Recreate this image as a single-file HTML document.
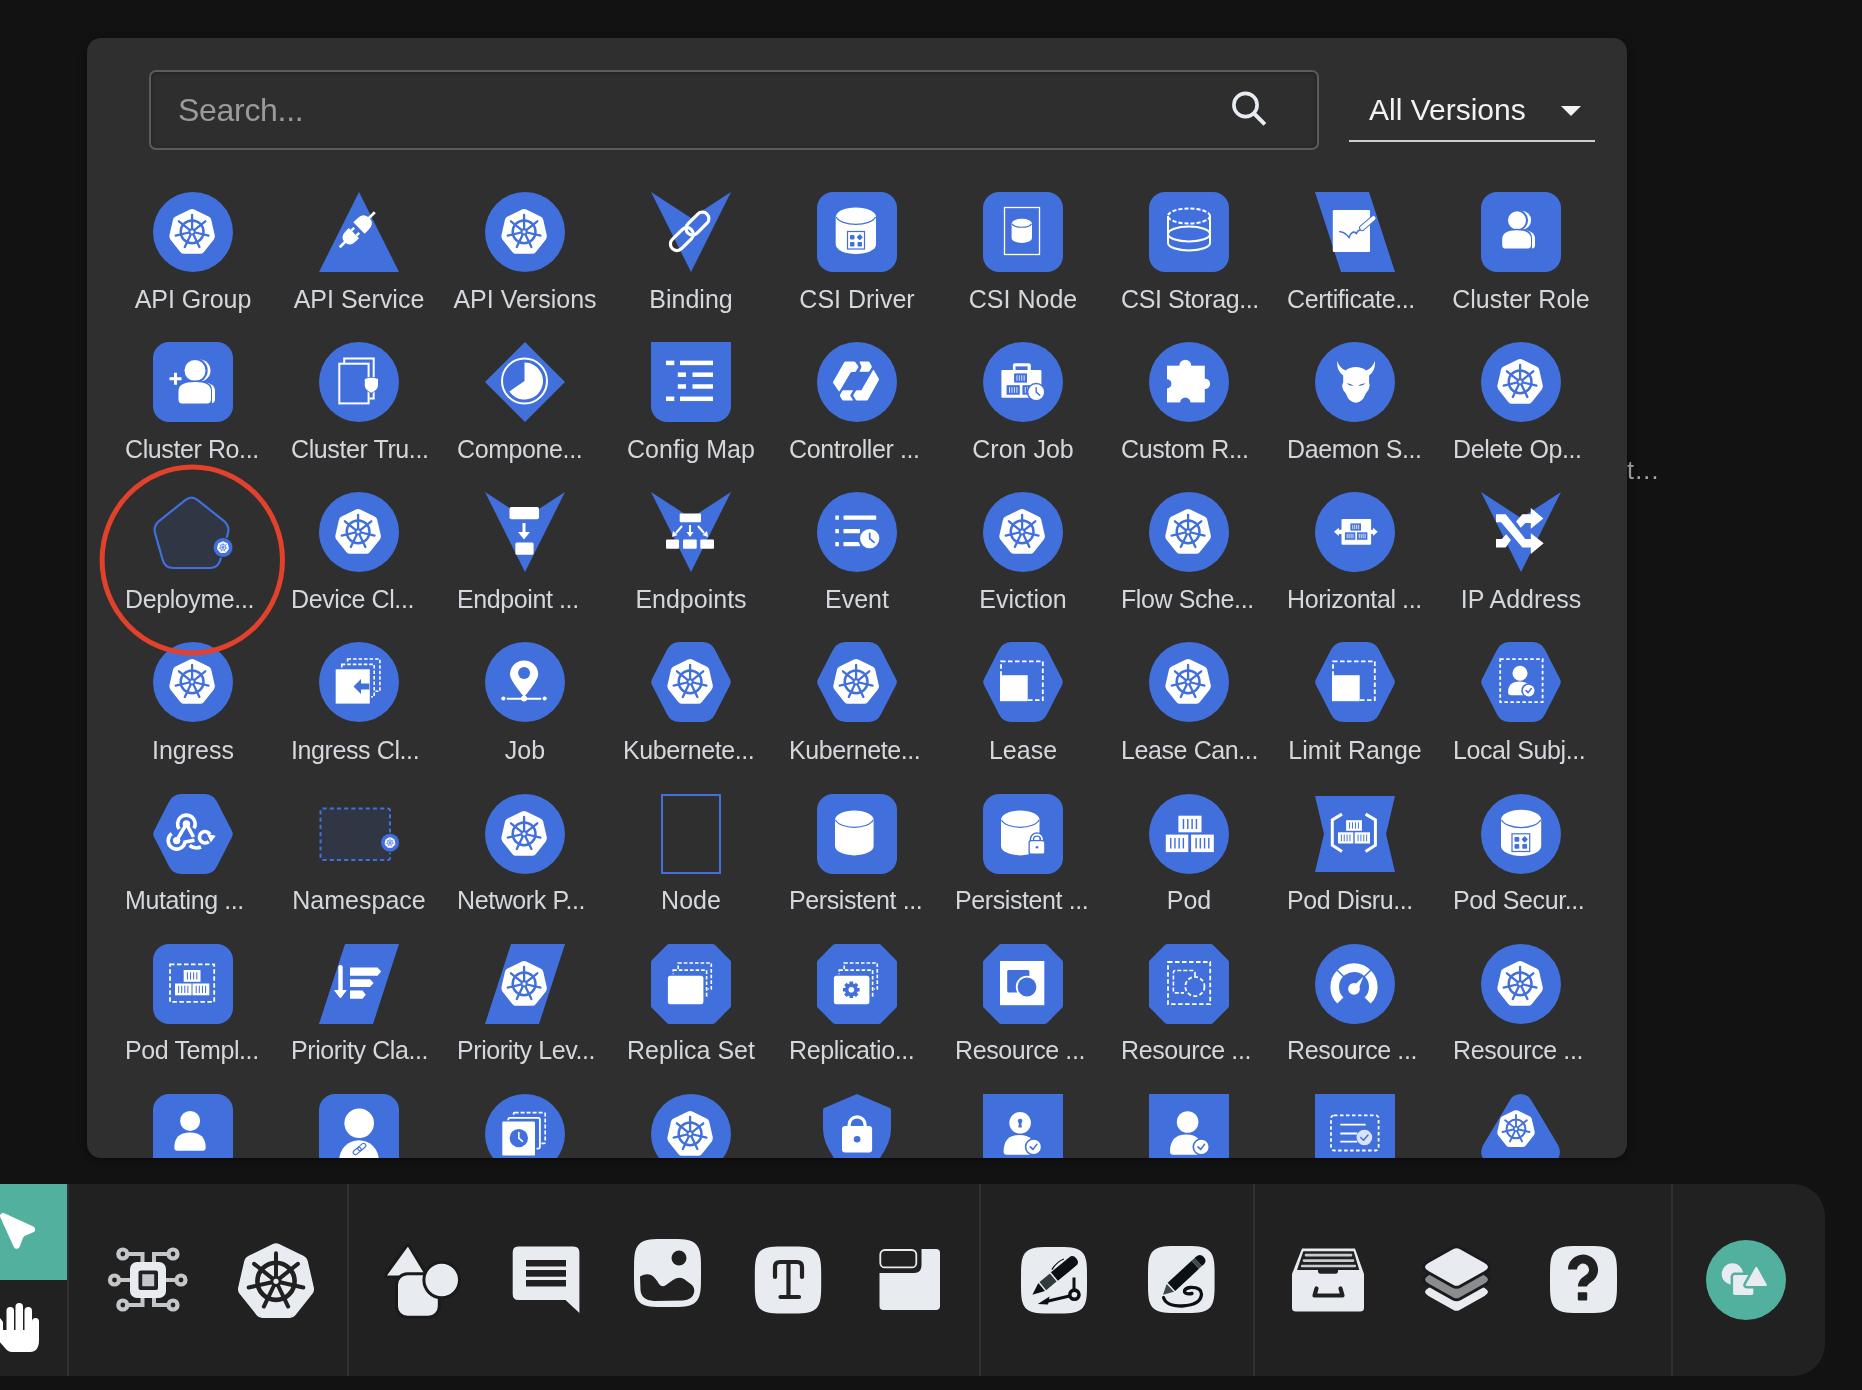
<!DOCTYPE html>
<html><head><meta charset="utf-8"><style>
*{margin:0;padding:0;box-sizing:border-box}
html,body{width:1862px;height:1390px;overflow:hidden;background:#121212;font-family:"Liberation Sans",sans-serif}
#panel,#bgt{will-change:transform}
#bgt{position:absolute;left:1627px;top:456px;font-size:25px;color:#a8a8a8;letter-spacing:1.2px}
#panel{position:absolute;left:87px;top:38px;width:1540px;height:1120px;background:#2f2f2f;border-radius:14px;overflow:hidden;box-shadow:0 2px 8px rgba(0,0,0,0.45)}
#search{position:absolute;left:62px;top:32px;width:1170px;height:80px;border:2px solid #5b5b5b;border-radius:7px;background:#2e2e2e;box-shadow:inset 0 1px 4px rgba(0,0,0,0.35)}
#search span{position:absolute;left:27px;top:20px;font-size:32px;color:#9b9b9b;letter-spacing:-0.3px}
#sicon{position:absolute;left:1077.5px;top:16px}
#ver{position:absolute;left:1262px;top:32px;width:246px;height:72px;border-bottom:2px solid #cfcfcf}
#ver span{position:absolute;left:20px;top:23px;font-size:30px;color:#f2f2f2}
#ver i{position:absolute;left:212px;top:36px;width:0;height:0;border-left:10px solid transparent;border-right:10px solid transparent;border-top:10px solid #f4f4f4}
.ic{position:absolute;overflow:visible}
.lb{position:absolute;font-size:25px;line-height:28px;color:#d4d7db;white-space:nowrap;letter-spacing:-0.4px}
.lb.c{letter-spacing:0}
.lb.c{width:180px;text-align:center}
#ring{position:absolute;left:0;top:0}
#tb{position:absolute;left:0;top:1184px;width:1825px;height:192px;background:#212121;border-radius:0 32px 32px 0}
.dv{position:absolute;top:0;width:2px;height:192px;background:#323232}
.tbi{position:absolute}
</style></head><body>
<div id="bgt">t...</div>
<div id="panel">
<div id="search"><span>Search...</span>
<svg id="sicon" width="40" height="40" viewBox="0 0 40 40"><circle cx="16.5" cy="17" r="11.6" fill="none" stroke="#e8ecf0" stroke-width="3.6"/><path d="M25 25.5L34.5 35" stroke="#e8ecf0" stroke-width="4" stroke-linecap="square"/></svg>
</div>
<div id="ver"><span>All Versions</span><i></i></div>
<svg class="ic" style="left:66px;top:154px" width="80" height="80" viewBox="0 0 80 80"><circle cx="40" cy="40" r="40" fill="#4170dc"/><path d="M36.96 17.53Q39.1 16.5 41.24 17.53L55.56 24.42Q57.71 25.46 58.24 27.78L61.77 43.27Q62.3 45.59 60.82 47.45L50.91 59.88Q49.43 61.74 47.05 61.74L31.15 61.74Q28.77 61.74 27.29 59.88L17.38 47.45Q15.9 45.59 16.43 43.27L19.96 27.78Q20.49 25.46 22.64 24.42Z" fill="#ffffff"/><circle cx="39.1" cy="39.8" r="11.4" fill="none" stroke="#4170dc" stroke-width="2.48"/><path d="M39.1 37.82L39.1 22.94M40.65 38.56L52.28 29.29M41.03 40.24L55.54 43.55M39.96 41.59L46.41 54.99M38.24 41.59L31.79 54.99M37.17 40.24L22.66 43.55M37.55 38.56L25.92 29.29" stroke="#4170dc" stroke-width="2.28" stroke-linecap="round"/><circle cx="39.1" cy="39.8" r="3.57" fill="#4170dc"/><circle cx="39.1" cy="39.8" r="1.59" fill="#ffffff"/></svg>
<div class="lb c" style="left:16px;top:247.3px">API Group</div>
<svg class="ic" style="left:232px;top:154px" width="80" height="80" viewBox="0 0 80 80"><path d="M40 0L80 80H0Z" fill="#4170dc"/><g transform="translate(38 38) scale(0.8) rotate(-45) translate(-38.5 -38)"><path d="M27 29H33V47H27Q17 47 17 38Q17 29 27 29Z" fill="#ffffff"/><rect x="8" y="36.3" width="10" height="3.4" fill="#ffffff"/><rect x="33" y="32" width="5" height="3" fill="#ffffff"/><rect x="33" y="41" width="5" height="3" fill="#ffffff"/><path d="M42 28H49Q60 28 60 38Q60 48 49 48H42Z" fill="#ffffff"/><rect x="59" y="36.3" width="11" height="3.4" fill="#ffffff"/></g></svg>
<div class="lb c" style="left:182px;top:247.3px">API Service</div>
<svg class="ic" style="left:398px;top:154px" width="80" height="80" viewBox="0 0 80 80"><circle cx="40" cy="40" r="40" fill="#4170dc"/><path d="M36.96 17.53Q39.1 16.5 41.24 17.53L55.56 24.42Q57.71 25.46 58.24 27.78L61.77 43.27Q62.3 45.59 60.82 47.45L50.91 59.88Q49.43 61.74 47.05 61.74L31.15 61.74Q28.77 61.74 27.29 59.88L17.38 47.45Q15.9 45.59 16.43 43.27L19.96 27.78Q20.49 25.46 22.64 24.42Z" fill="#ffffff"/><circle cx="39.1" cy="39.8" r="11.4" fill="none" stroke="#4170dc" stroke-width="2.48"/><path d="M39.1 37.82L39.1 22.94M40.65 38.56L52.28 29.29M41.03 40.24L55.54 43.55M39.96 41.59L46.41 54.99M38.24 41.59L31.79 54.99M37.17 40.24L22.66 43.55M37.55 38.56L25.92 29.29" stroke="#4170dc" stroke-width="2.28" stroke-linecap="round"/><circle cx="39.1" cy="39.8" r="3.57" fill="#4170dc"/><circle cx="39.1" cy="39.8" r="1.59" fill="#ffffff"/></svg>
<div class="lb c" style="left:348px;top:247.3px">API Versions</div>
<svg class="ic" style="left:564px;top:154px" width="80" height="80" viewBox="0 0 80 80"><path d="M0 0L40 26L80 0L40 80Z" fill="#4170dc"/><g transform="rotate(-45 39 39)" fill="none" stroke="#ffffff" stroke-width="3.2"><rect x="14" y="32.5" width="27" height="13" rx="6.5"/><rect x="36" y="32.5" width="27" height="13" rx="6.5"/></g></svg>
<div class="lb c" style="left:514px;top:247.3px">Binding</div>
<svg class="ic" style="left:730px;top:154px" width="80" height="80" viewBox="0 0 80 80"><rect width="80" height="80" rx="16" fill="#4170dc"/><path d="M18.7 25A20.15 9.5 0 0 1 59 25V52.5A20.15 9.5 0 0 1 18.7 52.5Z" fill="#ffffff"/><path d="M19.2 25A20.15 9.5 0 0 0 58.5 25" fill="none" stroke="#4170dc" stroke-width="1.2"/><rect x="30.5" y="39.5" width="17" height="17.5" fill="none" stroke="#4170dc" stroke-width="1.2"/><rect x="33" y="43" width="4.5" height="4.5" rx="1" fill="#4170dc"/><rect x="40.5" y="43" width="4.5" height="4.5" rx="1" fill="#4170dc" transform="rotate(45 42.75 45.25)"/><rect x="33" y="50" width="4.5" height="4.5" rx="1" fill="#4170dc"/><rect x="40.5" y="50" width="4.5" height="4.5" rx="1" fill="#4170dc"/></svg>
<div class="lb c" style="left:680px;top:247.3px">CSI Driver</div>
<svg class="ic" style="left:896px;top:154px" width="80" height="80" viewBox="0 0 80 80"><rect width="80" height="80" rx="16" fill="#4170dc"/><rect x="21.5" y="15.5" width="35" height="47" fill="none" stroke="#ffffff" stroke-width="1.3"/><path d="M28.6 31.8A10.2 5 0 0 1 49 31.8V46A10.2 5 0 0 1 28.6 46Z" fill="#ffffff"/><path d="M29.1 31.8A10.2 5 0 0 0 48.5 31.8" fill="none" stroke="#4170dc" stroke-width="1.2"/></svg>
<div class="lb c" style="left:846px;top:247.3px">CSI Node</div>
<svg class="ic" style="left:1062px;top:154px" width="80" height="80" viewBox="0 0 80 80"><rect width="80" height="80" rx="16" fill="#4170dc"/><g fill="none" stroke="#ffffff" stroke-width="2"><ellipse cx="40" cy="24" rx="21" ry="7.5" stroke-dasharray="4 2"/><path d="M19 24V51A21 7.5 0 0 0 61 51V24"/><ellipse cx="40" cy="42" rx="21" ry="7.5"/></g></svg>
<div class="lb" style="left:1034px;top:247.3px">CSI Storag...</div>
<svg class="ic" style="left:1228px;top:154px" width="80" height="80" viewBox="0 0 80 80"><path d="M0 0H54L80 80H26Z" fill="#4170dc"/><rect x="17.8" y="18.1" width="37.2" height="41.8" rx="1.2" fill="#ffffff"/><path d="M24.7 39.7Q29.5 39.5 34 45.5Q37 37.5 41.4 41.4Q43 37.5 46 38" fill="none" stroke="#4170dc" stroke-width="1.5" stroke-linecap="round"/><g transform="translate(46 37) rotate(-41)"><rect x="-1" y="-2.6" width="20" height="5.2" rx="2.6" fill="#ffffff" stroke="#4170dc" stroke-width="1"/></g></svg>
<div class="lb" style="left:1200px;top:247.3px">Certificate...</div>
<svg class="ic" style="left:1394px;top:154px" width="80" height="80" viewBox="0 0 80 80"><rect width="80" height="80" rx="16" fill="#4170dc"/><circle cx="40.5" cy="28.3" r="9.6" fill="#ffffff"/><path d="M27 56.4V47Q27 38 40 38Q54 38 54 47V53Q54 56.4 51 56.4Z" fill="#ffffff"/><circle cx="36.5" cy="28.3" r="10.6" fill="#4170dc"/><circle cx="36" cy="28.3" r="9" fill="#ffffff"/><path d="M20 57.5V46Q20 36.8 36 36.8Q51 36.8 51 46V57.5Z" fill="#4170dc"/><path d="M21.2 56.4V47Q21.2 38.3 36 38.3Q50 38.3 50 47V53Q50 56.4 47 56.4H24Q21.2 56.4 21.2 53Z" fill="#ffffff"/></svg>
<div class="lb c" style="left:1344px;top:247.3px">Cluster Role</div>
<svg class="ic" style="left:66px;top:304px" width="80" height="80" viewBox="0 0 80 80"><rect width="80" height="80" rx="16" fill="#4170dc"/><circle cx="46.5" cy="28.5" r="11" fill="#ffffff"/><path d="M31 61.6V49Q31 40 46 40Q62 40 62 49V57Q62 61.6 57 61.6Z" fill="#ffffff"/><circle cx="42.5" cy="28.5" r="12.2" fill="#4170dc"/><circle cx="42" cy="28.5" r="10.5" fill="#ffffff"/><path d="M24 63V48Q24 38.5 42 38.5Q59 38.5 59 48V63Z" fill="#4170dc"/><path d="M25.5 61.6V49Q25.5 40 42 40Q58 40 58 49V57Q58 61.6 54 61.6H29Q25.5 61.6 25.5 57Z" fill="#ffffff"/><path d="M16.5 36.7H28.5M22.5 30.7V42.7" stroke="#ffffff" stroke-width="3"/></svg>
<div class="lb" style="left:38px;top:397.3px">Cluster Ro...</div>
<svg class="ic" style="left:232px;top:304px" width="80" height="80" viewBox="0 0 80 80"><circle cx="40" cy="40" r="40" fill="#4170dc"/><g fill="none" stroke="#ffffff" stroke-width="2"><path d="M25.2 21V16.5H54.7V56.6H50.6"/><rect x="20.3" y="21.7" width="29.3" height="39.7"/></g><path d="M45.8 37Q52.4 34.5 59 37V43.7Q59 47.5 52.4 50.8Q45.8 47.5 45.8 43.7Z" fill="#ffffff" stroke="#4170dc" stroke-width="1.6" paint-order="stroke"/></svg>
<div class="lb" style="left:204px;top:397.3px">Cluster Tru...</div>
<svg class="ic" style="left:398px;top:304px" width="80" height="80" viewBox="0 0 80 80"><path d="M40 0L80 40L40 80L0 40Z" fill="#4170dc"/><circle cx="39.5" cy="39" r="22.5" fill="none" stroke="#ffffff" stroke-width="2"/><path d="M39.5 39L39.5 20.5A18.5 18.5 0 1 1 24.35 49.61Z" fill="#ffffff"/></svg>
<div class="lb" style="left:370px;top:397.3px">Compone...</div>
<svg class="ic" style="left:564px;top:304px" width="80" height="80" viewBox="0 0 80 80"><path d="M0 0H80V64A16 16 0 0 1 64 80H16A16 16 0 0 1 0 64Z" fill="#4170dc"/><rect x="15" y="18.65" width="8.3" height="4.5" fill="#ffffff"/><rect x="29" y="18.65" width="33" height="4.5" fill="#ffffff"/><rect x="26.8" y="30.45" width="8.2" height="4.5" fill="#ffffff"/><rect x="41.5" y="30.45" width="20.5" height="4.5" fill="#ffffff"/><rect x="26.8" y="42.25" width="8.2" height="4.5" fill="#ffffff"/><rect x="41.5" y="42.25" width="20.5" height="4.5" fill="#ffffff"/><rect x="15" y="54.55" width="8.3" height="4.5" fill="#ffffff"/><rect x="29" y="54.55" width="33" height="4.5" fill="#ffffff"/></svg>
<div class="lb c" style="left:514px;top:397.3px">Config Map</div>
<svg class="ic" style="left:730px;top:304px" width="80" height="80" viewBox="0 0 80 80"><circle cx="40" cy="40" r="40" fill="#4170dc"/><g fill="#ffffff"><path d="M27.1 20.47Q27.6 19.6 28.6 19.6L37 19.6Q38 19.6 38.59 20.41L41.11 23.89Q41.7 24.7 41.19 25.56L39.11 29.04Q38.6 29.9 37.6 29.9L35 29.9Q34 29.9 33.49 30.76L22.71 48.94Q22.2 49.8 21.64 48.97L16.36 41.13Q15.8 40.3 16.3 39.43Z"/><path d="M42.63 20.33Q42.3 19.6 43.1 19.6L51.3 19.6Q52.1 19.6 52.5 20.3L54.6 24Q55 24.7 54.6 25.39L52.5 29.01Q52.1 29.7 51.3 29.7L43.1 29.7Q42.3 29.7 42.63 28.97L44.27 25.43Q44.6 24.7 44.27 23.97Z"/><path d="M55.9 28.17Q56.4 27.3 56.9 28.17L61.7 36.53Q62.2 37.4 61.72 38.28L51.08 57.52Q50.6 58.4 49.6 58.4L40.1 58.4Q39.1 58.4 38.57 57.55L36.53 54.35Q36 53.5 36.51 52.64L38.59 49.16Q39.1 48.3 40.1 48.3L43.3 48.3Q44.3 48.3 44.8 47.43Z"/><path d="M25.21 49Q25.6 48.3 26.4 48.3L35.5 48.3Q36.3 48.3 35.88 48.98L33.52 52.82Q33.1 53.5 33.54 54.17L35.86 57.73Q36.3 58.4 35.5 58.4L26.4 58.4Q25.6 58.4 25.19 57.71L23.11 54.19Q22.7 53.5 23.09 52.8Z"/></g></svg>
<div class="lb" style="left:702px;top:397.3px">Controller ...</div>
<svg class="ic" style="left:896px;top:304px" width="80" height="80" viewBox="0 0 80 80"><circle cx="40" cy="40" r="40" fill="#4170dc"/><rect x="29.9" y="21.3" width="17.9" height="8" rx="2" fill="#ffffff"/><rect x="32.5" y="24.4" width="12.1" height="4" fill="#4170dc"/><rect x="18.4" y="27.9" width="40" height="27.9" rx="1" fill="#ffffff"/><rect x="31.1" y="31.4" width="12.9" height="9.2" fill="#4170dc"/><path d="M33.94 33.24V38.76M36.35 33.24V38.76M38.75 33.24V38.76M41.16 33.24V38.76" stroke="#ffffff" stroke-width="0.81"/><rect x="23.6" y="43.2" width="13.2" height="9.5" fill="#4170dc"/><path d="M26.5 45.1V50.8M28.97 45.1V50.8M31.43 45.1V50.8M33.9 45.1V50.8" stroke="#ffffff" stroke-width="0.82"/><rect x="39.4" y="43.2" width="13.2" height="9.5" fill="#4170dc"/><path d="M42.3 45.1V50.8M44.77 45.1V50.8M47.23 45.1V50.8M49.7 45.1V50.8" stroke="#ffffff" stroke-width="0.82"/><circle cx="53.2" cy="50.1" r="9.4" fill="#4170dc"/><circle cx="53.2" cy="50.1" r="7.9" fill="#ffffff"/><path d="M53.2 45.76V50.1L56.76 53.26" fill="none" stroke="#4170dc" stroke-width="1.42" stroke-linecap="round"/></svg>
<div class="lb c" style="left:846px;top:397.3px">Cron Job</div>
<svg class="ic" style="left:1062px;top:304px" width="80" height="80" viewBox="0 0 80 80"><circle cx="40" cy="40" r="40" fill="#4170dc"/><rect x="18" y="23.7" width="37.8" height="36.7" fill="#ffffff"/><circle cx="36.3" cy="23.8" r="6" fill="#ffffff"/><circle cx="55.8" cy="41.8" r="5.3" fill="#ffffff"/><circle cx="36.3" cy="60.6" r="5.2" fill="#4170dc"/><circle cx="17.8" cy="41.8" r="4.6" fill="#4170dc"/></svg>
<div class="lb" style="left:1034px;top:397.3px">Custom R...</div>
<svg class="ic" style="left:1228px;top:304px" width="80" height="80" viewBox="0 0 80 80"><circle cx="40" cy="40" r="40" fill="#4170dc"/><path d="M22.2 19Q21.5 29 28.2 33.5V40.3L27 43.7Q27.5 48 31 51.8Q34 60.7 40.9 60.7Q47.5 60.7 50.6 51.8Q54.2 48 54.7 43.7L54.1 40.3V33.5Q60.7 29 59.9 19Q57.5 26 51.2 28.5Q47 25 40.9 25Q34.5 25 30.5 28.5Q24.5 26 22.2 19Z" fill="#ffffff"/><path d="M31.7 41.2Q34.5 44.5 38.6 43.7Q36 41.5 31.7 41.2ZM50.6 41.2Q47.5 44.5 43.2 43.4Q46 41.5 50.6 41.2Z" fill="#4170dc"/></svg>
<div class="lb" style="left:1200px;top:397.3px">Daemon S...</div>
<svg class="ic" style="left:1394px;top:304px" width="80" height="80" viewBox="0 0 80 80"><circle cx="40" cy="40" r="40" fill="#4170dc"/><path d="M36.96 17.53Q39.1 16.5 41.24 17.53L55.56 24.42Q57.71 25.46 58.24 27.78L61.77 43.27Q62.3 45.59 60.82 47.45L50.91 59.88Q49.43 61.74 47.05 61.74L31.15 61.74Q28.77 61.74 27.29 59.88L17.38 47.45Q15.9 45.59 16.43 43.27L19.96 27.78Q20.49 25.46 22.64 24.42Z" fill="#ffffff"/><circle cx="39.1" cy="39.8" r="11.4" fill="none" stroke="#4170dc" stroke-width="2.48"/><path d="M39.1 37.82L39.1 22.94M40.65 38.56L52.28 29.29M41.03 40.24L55.54 43.55M39.96 41.59L46.41 54.99M38.24 41.59L31.79 54.99M37.17 40.24L22.66 43.55M37.55 38.56L25.92 29.29" stroke="#4170dc" stroke-width="2.28" stroke-linecap="round"/><circle cx="39.1" cy="39.8" r="3.57" fill="#4170dc"/><circle cx="39.1" cy="39.8" r="1.59" fill="#ffffff"/></svg>
<div class="lb" style="left:1366px;top:397.3px">Delete Op...</div>
<svg class="ic" style="left:66px;top:454px" width="80" height="80" viewBox="0 0 80 80"><path d="M32.27 8.02Q38.5 3 44.73 8.02L70.77 28.98Q77 34 74.8 41.69L67.2 68.31Q65 76 57 76L20 76Q12 76 9.8 68.31L2.2 41.69Q0 34 6.23 28.98Z" fill="#313644" stroke="#4170dc" stroke-width="2.2"/><circle cx="70" cy="55.5" r="10.5" fill="#313644"/><circle cx="70" cy="55.5" r="9.4" fill="#4170dc"/><path d="M69.44 49.5Q70 49.23 70.56 49.5L74.29 51.29Q74.85 51.56 74.99 52.17L75.91 56.2Q76.04 56.81 75.66 57.29L73.08 60.53Q72.69 61.02 72.07 61.02L67.93 61.02Q67.31 61.02 66.92 60.53L64.34 57.29Q63.96 56.81 64.09 56.2L65.01 52.17Q65.15 51.56 65.71 51.29Z" fill="#ffffff"/><circle cx="70" cy="55.3" r="2.97" fill="none" stroke="#4170dc" stroke-width="0.65"/><path d="M70 54.78L70 50.91M70.4 54.98L73.43 52.56M70.5 55.41L74.28 56.28M70.22 55.77L71.91 59.26M69.78 55.77L68.09 59.26M69.5 55.41L65.72 56.28M69.6 54.98L66.57 52.56" stroke="#4170dc" stroke-width="0.59" stroke-linecap="round"/><circle cx="70" cy="55.3" r="0.93" fill="#4170dc"/><circle cx="70" cy="55.3" r="0.41" fill="#ffffff"/></svg>
<div class="lb" style="left:38px;top:547.3px">Deployme...</div>
<svg class="ic" style="left:232px;top:454px" width="80" height="80" viewBox="0 0 80 80"><circle cx="40" cy="40" r="40" fill="#4170dc"/><path d="M36.96 17.53Q39.1 16.5 41.24 17.53L55.56 24.42Q57.71 25.46 58.24 27.78L61.77 43.27Q62.3 45.59 60.82 47.45L50.91 59.88Q49.43 61.74 47.05 61.74L31.15 61.74Q28.77 61.74 27.29 59.88L17.38 47.45Q15.9 45.59 16.43 43.27L19.96 27.78Q20.49 25.46 22.64 24.42Z" fill="#ffffff"/><circle cx="39.1" cy="39.8" r="11.4" fill="none" stroke="#4170dc" stroke-width="2.48"/><path d="M39.1 37.82L39.1 22.94M40.65 38.56L52.28 29.29M41.03 40.24L55.54 43.55M39.96 41.59L46.41 54.99M38.24 41.59L31.79 54.99M37.17 40.24L22.66 43.55M37.55 38.56L25.92 29.29" stroke="#4170dc" stroke-width="2.28" stroke-linecap="round"/><circle cx="39.1" cy="39.8" r="3.57" fill="#4170dc"/><circle cx="39.1" cy="39.8" r="1.59" fill="#ffffff"/></svg>
<div class="lb" style="left:204px;top:547.3px">Device Cl...</div>
<svg class="ic" style="left:398px;top:454px" width="80" height="80" viewBox="0 0 80 80"><path d="M0 0L40 26L80 0L40 80Z" fill="#4170dc"/><rect x="24.5" y="15" width="29.5" height="12.3" rx="2" fill="#ffffff"/><path d="M39 31V41" stroke="#ffffff" stroke-width="3"/><path d="M33 40H45L39 47.5Z" fill="#ffffff"/><rect x="30.4" y="50.4" width="18.2" height="12.3" rx="1.5" fill="#ffffff"/></svg>
<div class="lb" style="left:370px;top:547.3px">Endpoint ...</div>
<svg class="ic" style="left:564px;top:454px" width="80" height="80" viewBox="0 0 80 80"><path d="M0 0L40 26L80 0L40 80Z" fill="#4170dc"/><rect x="28.7" y="21.4" width="21.3" height="8.9" rx="1" fill="#ffffff"/><rect x="15" y="47.4" width="13" height="9.4" rx="1" fill="#ffffff"/><rect x="32" y="47.4" width="13.7" height="9.4" rx="1" fill="#ffffff"/><rect x="49.3" y="47.4" width="13.7" height="9.4" rx="1" fill="#ffffff"/><path d="M39 33V41M31 34L25 41M47 34L53 41" stroke="#ffffff" stroke-width="2"/><path d="M35.5 40H42.5L39 45ZM22 39L26.5 43L21 45ZM56 39L51.5 43L57 45Z" fill="#ffffff"/></svg>
<div class="lb c" style="left:514px;top:547.3px">Endpoints</div>
<svg class="ic" style="left:730px;top:454px" width="80" height="80" viewBox="0 0 80 80"><circle cx="40" cy="40" r="40" fill="#4170dc"/><rect x="18.3" y="23.4" width="3.6" height="4.4" rx="0.6" fill="#ffffff"/><rect x="26.5" y="23.4" width="32.7" height="4.4" rx="0.6" fill="#ffffff"/><rect x="18.3" y="36.9" width="3.6" height="4.4" rx="0.6" fill="#ffffff"/><rect x="26.5" y="36.9" width="16.5" height="4.4" rx="0.6" fill="#ffffff"/><rect x="18.3" y="49.9" width="3.6" height="4.4" rx="0.6" fill="#ffffff"/><rect x="26.5" y="49.9" width="16.5" height="4.4" rx="0.6" fill="#ffffff"/><circle cx="52.7" cy="46.6" r="11.6" fill="#4170dc"/><circle cx="52.7" cy="46.6" r="9.6" fill="#ffffff"/><path d="M52.7 41.32V46.6L57.02 50.44" fill="none" stroke="#4170dc" stroke-width="1.73" stroke-linecap="round"/></svg>
<div class="lb c" style="left:680px;top:547.3px">Event</div>
<svg class="ic" style="left:896px;top:454px" width="80" height="80" viewBox="0 0 80 80"><circle cx="40" cy="40" r="40" fill="#4170dc"/><path d="M36.96 17.53Q39.1 16.5 41.24 17.53L55.56 24.42Q57.71 25.46 58.24 27.78L61.77 43.27Q62.3 45.59 60.82 47.45L50.91 59.88Q49.43 61.74 47.05 61.74L31.15 61.74Q28.77 61.74 27.29 59.88L17.38 47.45Q15.9 45.59 16.43 43.27L19.96 27.78Q20.49 25.46 22.64 24.42Z" fill="#ffffff"/><circle cx="39.1" cy="39.8" r="11.4" fill="none" stroke="#4170dc" stroke-width="2.48"/><path d="M39.1 37.82L39.1 22.94M40.65 38.56L52.28 29.29M41.03 40.24L55.54 43.55M39.96 41.59L46.41 54.99M38.24 41.59L31.79 54.99M37.17 40.24L22.66 43.55M37.55 38.56L25.92 29.29" stroke="#4170dc" stroke-width="2.28" stroke-linecap="round"/><circle cx="39.1" cy="39.8" r="3.57" fill="#4170dc"/><circle cx="39.1" cy="39.8" r="1.59" fill="#ffffff"/></svg>
<div class="lb c" style="left:846px;top:547.3px">Eviction</div>
<svg class="ic" style="left:1062px;top:454px" width="80" height="80" viewBox="0 0 80 80"><circle cx="40" cy="40" r="40" fill="#4170dc"/><path d="M36.96 17.53Q39.1 16.5 41.24 17.53L55.56 24.42Q57.71 25.46 58.24 27.78L61.77 43.27Q62.3 45.59 60.82 47.45L50.91 59.88Q49.43 61.74 47.05 61.74L31.15 61.74Q28.77 61.74 27.29 59.88L17.38 47.45Q15.9 45.59 16.43 43.27L19.96 27.78Q20.49 25.46 22.64 24.42Z" fill="#ffffff"/><circle cx="39.1" cy="39.8" r="11.4" fill="none" stroke="#4170dc" stroke-width="2.48"/><path d="M39.1 37.82L39.1 22.94M40.65 38.56L52.28 29.29M41.03 40.24L55.54 43.55M39.96 41.59L46.41 54.99M38.24 41.59L31.79 54.99M37.17 40.24L22.66 43.55M37.55 38.56L25.92 29.29" stroke="#4170dc" stroke-width="2.28" stroke-linecap="round"/><circle cx="39.1" cy="39.8" r="3.57" fill="#4170dc"/><circle cx="39.1" cy="39.8" r="1.59" fill="#ffffff"/></svg>
<div class="lb" style="left:1034px;top:547.3px">Flow Sche...</div>
<svg class="ic" style="left:1228px;top:454px" width="80" height="80" viewBox="0 0 80 80"><circle cx="40" cy="40" r="40" fill="#4170dc"/><rect x="26.5" y="27" width="29.6" height="25.7" rx="1" fill="#ffffff"/><rect x="35.4" y="31.4" width="10.6" height="7.2" fill="#4170dc"/><path d="M37.73 32.84V37.16M39.71 32.84V37.16M41.69 32.84V37.16M43.67 32.84V37.16" stroke="#ffffff" stroke-width="0.8"/><rect x="29.9" y="40.3" width="10.4" height="7.5" fill="#4170dc"/><path d="M32.19 41.8V46.3M34.13 41.8V46.3M36.07 41.8V46.3M38.01 41.8V46.3" stroke="#ffffff" stroke-width="0.8"/><rect x="42" y="40.3" width="10.4" height="7.5" fill="#4170dc"/><path d="M44.29 41.8V46.3M46.23 41.8V46.3M48.17 41.8V46.3M50.11 41.8V46.3" stroke="#ffffff" stroke-width="0.8"/><path d="M19 39.7L23.8 35.7V37.7H27V42H23.8V44Z" fill="#ffffff"/><path d="M62.7 39.7L58 35.7V37.7H55V42H58V44Z" fill="#ffffff"/></svg>
<div class="lb" style="left:1200px;top:547.3px">Horizontal ...</div>
<svg class="ic" style="left:1394px;top:454px" width="80" height="80" viewBox="0 0 80 80"><path d="M0 0L40 26L80 0L40 80Z" fill="#4170dc"/><g fill="#ffffff"><path d="M15 22.2H24.7L44.3 46.9H49.8V41.2L62.7 51.2L49.8 61.9V55.5H41.4L20.1 30.2H15Z"/><path d="M15 46.9H20.7L25.3 42.3L29.9 48.1L24.7 55.5H15Z"/><path d="M35.1 29.6L41.4 22.2H49.8V16.1L62.4 26.5L49.8 36.8V31.1H44.3L39.7 35.7Z"/></g></svg>
<div class="lb c" style="left:1344px;top:547.3px">IP Address</div>
<svg class="ic" style="left:66px;top:604px" width="80" height="80" viewBox="0 0 80 80"><circle cx="40" cy="40" r="40" fill="#4170dc"/><path d="M36.96 17.53Q39.1 16.5 41.24 17.53L55.56 24.42Q57.71 25.46 58.24 27.78L61.77 43.27Q62.3 45.59 60.82 47.45L50.91 59.88Q49.43 61.74 47.05 61.74L31.15 61.74Q28.77 61.74 27.29 59.88L17.38 47.45Q15.9 45.59 16.43 43.27L19.96 27.78Q20.49 25.46 22.64 24.42Z" fill="#ffffff"/><circle cx="39.1" cy="39.8" r="11.4" fill="none" stroke="#4170dc" stroke-width="2.48"/><path d="M39.1 37.82L39.1 22.94M40.65 38.56L52.28 29.29M41.03 40.24L55.54 43.55M39.96 41.59L46.41 54.99M38.24 41.59L31.79 54.99M37.17 40.24L22.66 43.55M37.55 38.56L25.92 29.29" stroke="#4170dc" stroke-width="2.28" stroke-linecap="round"/><circle cx="39.1" cy="39.8" r="3.57" fill="#4170dc"/><circle cx="39.1" cy="39.8" r="1.59" fill="#ffffff"/></svg>
<div class="lb c" style="left:16px;top:698.3px">Ingress</div>
<svg class="ic" style="left:232px;top:604px" width="80" height="80" viewBox="0 0 80 80"><circle cx="40" cy="40" r="40" fill="#4170dc"/><rect x="28.6" y="17" width="32.3" height="32.2" rx="0" fill="none" stroke="#ffffff" stroke-width="1.6" stroke-dasharray="3.5 2"/><rect x="21.6" y="21.2" width="34.8" height="34.8" fill="#4170dc"/><rect x="22.8" y="22.4" width="32.4" height="32.4" rx="0" fill="none" stroke="#ffffff" stroke-width="1.6" stroke-dasharray="3.5 2"/><rect x="15.5" y="26" width="36.6" height="36.9" fill="#4170dc"/><rect x="16.7" y="27.3" width="34.1" height="34.3" fill="#ffffff"/><path d="M50.3 41.5H42V37L34.5 44.5L42 52V47.5H50.3Z" fill="#4170dc"/></svg>
<div class="lb" style="left:204px;top:698.3px">Ingress Cl...</div>
<svg class="ic" style="left:398px;top:604px" width="80" height="80" viewBox="0 0 80 80"><circle cx="40" cy="40" r="40" fill="#4170dc"/><path d="M39.1 55Q25 38 25 32.5A14.1 14.1 0 0 1 53.2 32.5Q53.2 38 39.1 55Z" fill="#ffffff"/><circle cx="39.1" cy="31.1" r="6" fill="#4170dc"/><path d="M21.8 56.7H56.2" stroke="#ffffff" stroke-width="1.9"/><circle cx="18.4" cy="56.5" r="2.1" fill="#ffffff"/><circle cx="59.6" cy="56.5" r="2.1" fill="#ffffff"/><circle cx="39.1" cy="56.5" r="3" fill="#ffffff"/></svg>
<div class="lb c" style="left:348px;top:698.3px">Job</div>
<svg class="ic" style="left:564px;top:604px" width="80" height="80" viewBox="0 0 80 80"><path d="M0.87 42.67Q-0.5 40 0.87 37.33L16.12 7.56Q20 0 28.5 0L51.5 0Q60 0 63.88 7.56L79.13 37.33Q80.5 40 79.13 42.67L63.88 72.44Q60 80 51.5 80L28.5 80Q20 80 16.12 72.44Z" fill="#4170dc"/><path d="M36.96 17.53Q39.1 16.5 41.24 17.53L55.56 24.42Q57.71 25.46 58.24 27.78L61.77 43.27Q62.3 45.59 60.82 47.45L50.91 59.88Q49.43 61.74 47.05 61.74L31.15 61.74Q28.77 61.74 27.29 59.88L17.38 47.45Q15.9 45.59 16.43 43.27L19.96 27.78Q20.49 25.46 22.64 24.42Z" fill="#ffffff"/><circle cx="39.1" cy="39.8" r="11.4" fill="none" stroke="#4170dc" stroke-width="2.48"/><path d="M39.1 37.82L39.1 22.94M40.65 38.56L52.28 29.29M41.03 40.24L55.54 43.55M39.96 41.59L46.41 54.99M38.24 41.59L31.79 54.99M37.17 40.24L22.66 43.55M37.55 38.56L25.92 29.29" stroke="#4170dc" stroke-width="2.28" stroke-linecap="round"/><circle cx="39.1" cy="39.8" r="3.57" fill="#4170dc"/><circle cx="39.1" cy="39.8" r="1.59" fill="#ffffff"/></svg>
<div class="lb" style="left:536px;top:698.3px">Kubernete...</div>
<svg class="ic" style="left:730px;top:604px" width="80" height="80" viewBox="0 0 80 80"><path d="M0.87 42.67Q-0.5 40 0.87 37.33L16.12 7.56Q20 0 28.5 0L51.5 0Q60 0 63.88 7.56L79.13 37.33Q80.5 40 79.13 42.67L63.88 72.44Q60 80 51.5 80L28.5 80Q20 80 16.12 72.44Z" fill="#4170dc"/><path d="M36.96 17.53Q39.1 16.5 41.24 17.53L55.56 24.42Q57.71 25.46 58.24 27.78L61.77 43.27Q62.3 45.59 60.82 47.45L50.91 59.88Q49.43 61.74 47.05 61.74L31.15 61.74Q28.77 61.74 27.29 59.88L17.38 47.45Q15.9 45.59 16.43 43.27L19.96 27.78Q20.49 25.46 22.64 24.42Z" fill="#ffffff"/><circle cx="39.1" cy="39.8" r="11.4" fill="none" stroke="#4170dc" stroke-width="2.48"/><path d="M39.1 37.82L39.1 22.94M40.65 38.56L52.28 29.29M41.03 40.24L55.54 43.55M39.96 41.59L46.41 54.99M38.24 41.59L31.79 54.99M37.17 40.24L22.66 43.55M37.55 38.56L25.92 29.29" stroke="#4170dc" stroke-width="2.28" stroke-linecap="round"/><circle cx="39.1" cy="39.8" r="3.57" fill="#4170dc"/><circle cx="39.1" cy="39.8" r="1.59" fill="#ffffff"/></svg>
<div class="lb" style="left:702px;top:698.3px">Kubernete...</div>
<svg class="ic" style="left:896px;top:604px" width="80" height="80" viewBox="0 0 80 80"><path d="M0.87 42.67Q-0.5 40 0.87 37.33L16.12 7.56Q20 0 28.5 0L51.5 0Q60 0 63.88 7.56L79.13 37.33Q80.5 40 79.13 42.67L63.88 72.44Q60 80 51.5 80L28.5 80Q20 80 16.12 72.44Z" fill="#4170dc"/><rect x="18" y="19.3" width="41.8" height="38.9" rx="0" fill="none" stroke="#ffffff" stroke-width="1.8" stroke-dasharray="4.5 2.5"/><rect x="17" y="33.2" width="27.7" height="26" fill="#ffffff"/></svg>
<div class="lb c" style="left:846px;top:698.3px">Lease</div>
<svg class="ic" style="left:1062px;top:604px" width="80" height="80" viewBox="0 0 80 80"><circle cx="40" cy="40" r="40" fill="#4170dc"/><path d="M36.96 17.53Q39.1 16.5 41.24 17.53L55.56 24.42Q57.71 25.46 58.24 27.78L61.77 43.27Q62.3 45.59 60.82 47.45L50.91 59.88Q49.43 61.74 47.05 61.74L31.15 61.74Q28.77 61.74 27.29 59.88L17.38 47.45Q15.9 45.59 16.43 43.27L19.96 27.78Q20.49 25.46 22.64 24.42Z" fill="#ffffff"/><circle cx="39.1" cy="39.8" r="11.4" fill="none" stroke="#4170dc" stroke-width="2.48"/><path d="M39.1 37.82L39.1 22.94M40.65 38.56L52.28 29.29M41.03 40.24L55.54 43.55M39.96 41.59L46.41 54.99M38.24 41.59L31.79 54.99M37.17 40.24L22.66 43.55M37.55 38.56L25.92 29.29" stroke="#4170dc" stroke-width="2.28" stroke-linecap="round"/><circle cx="39.1" cy="39.8" r="3.57" fill="#4170dc"/><circle cx="39.1" cy="39.8" r="1.59" fill="#ffffff"/></svg>
<div class="lb" style="left:1034px;top:698.3px">Lease Can...</div>
<svg class="ic" style="left:1228px;top:604px" width="80" height="80" viewBox="0 0 80 80"><path d="M0.87 42.67Q-0.5 40 0.87 37.33L16.12 7.56Q20 0 28.5 0L51.5 0Q60 0 63.88 7.56L79.13 37.33Q80.5 40 79.13 42.67L63.88 72.44Q60 80 51.5 80L28.5 80Q20 80 16.12 72.44Z" fill="#4170dc"/><rect x="18" y="19.3" width="41.8" height="38.9" rx="0" fill="none" stroke="#ffffff" stroke-width="1.8" stroke-dasharray="4.5 2.5"/><rect x="17" y="33.2" width="27.7" height="26" fill="#ffffff"/></svg>
<div class="lb c" style="left:1178px;top:698.3px">Limit Range</div>
<svg class="ic" style="left:1394px;top:604px" width="80" height="80" viewBox="0 0 80 80"><path d="M0.87 42.67Q-0.5 40 0.87 37.33L16.12 7.56Q20 0 28.5 0L51.5 0Q60 0 63.88 7.56L79.13 37.33Q80.5 40 79.13 42.67L63.88 72.44Q60 80 51.5 80L28.5 80Q20 80 16.12 72.44Z" fill="#4170dc"/><rect x="19.2" y="17.2" width="42.4" height="42.9" rx="0" fill="none" stroke="#ffffff" stroke-width="1.8" stroke-dasharray="3.5 2.5"/><circle cx="39" cy="31.3" r="7.5" fill="#ffffff"/><path d="M27.1 50.3Q27.1 39.5 38.55 39.5H38.55Q50 39.5 50 50.3Q50 53.3 47 53.3H30.1Q27.1 53.3 27.1 50.3Z" fill="#ffffff"/><circle cx="47.7" cy="48.6" r="7.4" fill="#4170dc"/><circle cx="47.7" cy="48.6" r="5.8" fill="#ffffff"/><path d="M45.09 48.6L47.12 50.63L50.31 46.57" fill="none" stroke="#4170dc" stroke-width="1.6" stroke-linecap="round" stroke-linejoin="round"/></svg>
<div class="lb" style="left:1366px;top:698.3px">Local Subj...</div>
<svg class="ic" style="left:66px;top:756px" width="80" height="80" viewBox="0 0 80 80"><path d="M0.87 42.67Q-0.5 40 0.87 37.33L16.12 7.56Q20 0 28.5 0L51.5 0Q60 0 63.88 7.56L79.13 37.33Q80.5 40 79.13 42.67L63.88 72.44Q60 80 51.5 80L28.5 80Q20 80 16.12 72.44Z" fill="#4170dc"/><g fill="none" stroke="#ffffff" stroke-width="3.6"><path d="M26.2 35A8.8 8.8 0 1 1 41 34.3"/><path d="M33.4 29.9L23.6 46.6M33.4 29.9L40.5 43"/><path d="M18.7 39.6A8.5 8.5 0 1 0 32 48.1L41.5 46.2"/><path d="M36.5 51.5Q42 55.5 48 53"/><path d="M55.8 47.6A5.7 5.7 0 1 1 57 40.35"/></g><circle cx="33.4" cy="29.9" r="3.7" fill="#ffffff"/><circle cx="23.6" cy="46.6" r="3.7" fill="#ffffff"/><path d="M54 40L62.7 41.8L57.8 48.5Z" fill="#ffffff"/></svg>
<div class="lb" style="left:38px;top:848.3px">Mutating ...</div>
<svg class="ic" style="left:232px;top:756px" width="80" height="80" viewBox="0 0 80 80"><rect x="1.5" y="14.5" width="69.5" height="51.5" rx="2" fill="#313644" stroke="#4170dc" stroke-width="2" stroke-dasharray="4.2 3"/><circle cx="71" cy="48.7" r="10.2" fill="#313644"/><circle cx="71" cy="48.7" r="9" fill="#4170dc"/><path d="M70.5 43.36Q71 43.12 71.5 43.36L74.87 44.98Q75.38 45.23 75.5 45.77L76.33 49.42Q76.46 49.96 76.11 50.4L73.78 53.32Q73.43 53.76 72.87 53.76L69.13 53.76Q68.57 53.76 68.22 53.32L65.89 50.4Q65.54 49.96 65.67 49.42L66.5 45.77Q66.62 45.23 67.13 44.98Z" fill="#ffffff"/><circle cx="71" cy="48.6" r="2.68" fill="none" stroke="#4170dc" stroke-width="0.58"/><path d="M71 48.13L71 44.63M71.36 48.31L74.1 46.13M71.45 48.7L74.87 49.48M71.2 49.02L72.72 52.17M70.8 49.02L69.28 52.17M70.55 48.7L67.13 49.48M70.64 48.31L67.9 46.13" stroke="#4170dc" stroke-width="0.54" stroke-linecap="round"/><circle cx="71" cy="48.6" r="0.84" fill="#4170dc"/><circle cx="71" cy="48.6" r="0.37" fill="#ffffff"/></svg>
<div class="lb c" style="left:182px;top:848.3px">Namespace</div>
<svg class="ic" style="left:398px;top:756px" width="80" height="80" viewBox="0 0 80 80"><circle cx="40" cy="40" r="40" fill="#4170dc"/><path d="M36.96 17.53Q39.1 16.5 41.24 17.53L55.56 24.42Q57.71 25.46 58.24 27.78L61.77 43.27Q62.3 45.59 60.82 47.45L50.91 59.88Q49.43 61.74 47.05 61.74L31.15 61.74Q28.77 61.74 27.29 59.88L17.38 47.45Q15.9 45.59 16.43 43.27L19.96 27.78Q20.49 25.46 22.64 24.42Z" fill="#ffffff"/><circle cx="39.1" cy="39.8" r="11.4" fill="none" stroke="#4170dc" stroke-width="2.48"/><path d="M39.1 37.82L39.1 22.94M40.65 38.56L52.28 29.29M41.03 40.24L55.54 43.55M39.96 41.59L46.41 54.99M38.24 41.59L31.79 54.99M37.17 40.24L22.66 43.55M37.55 38.56L25.92 29.29" stroke="#4170dc" stroke-width="2.28" stroke-linecap="round"/><circle cx="39.1" cy="39.8" r="3.57" fill="#4170dc"/><circle cx="39.1" cy="39.8" r="1.59" fill="#ffffff"/></svg>
<div class="lb" style="left:370px;top:848.3px">Network P...</div>
<svg class="ic" style="left:564px;top:756px" width="80" height="80" viewBox="0 0 80 80"><rect x="11" y="1" width="58" height="78" fill="none" stroke="#4170dc" stroke-width="2"/></svg>
<div class="lb c" style="left:514px;top:848.3px">Node</div>
<svg class="ic" style="left:730px;top:756px" width="80" height="80" viewBox="0 0 80 80"><rect width="80" height="80" rx="16" fill="#4170dc"/><path d="M18 26A19.3 9.5 0 0 1 56.6 26V51.9A19.3 9.5 0 0 1 18 51.9Z" fill="#ffffff"/><path d="M18.5 26A19.3 9.5 0 0 0 56.1 26" fill="none" stroke="#4170dc" stroke-width="1.2"/></svg>
<div class="lb" style="left:702px;top:848.3px">Persistent ...</div>
<svg class="ic" style="left:896px;top:756px" width="80" height="80" viewBox="0 0 80 80"><rect width="80" height="80" rx="16" fill="#4170dc"/><path d="M18 26A19.25 9.5 0 0 1 56.5 26V51.9A19.25 9.5 0 0 1 18 51.9Z" fill="#ffffff"/><path d="M18.5 26A19.25 9.5 0 0 0 56 26" fill="none" stroke="#4170dc" stroke-width="1.2"/><path d="M49 47.5V45.5A5 5 0 0 1 59 45.5V47.5" fill="none" stroke="#4170dc" stroke-width="4.5"/><path d="M49 47.5V45.5A5 5 0 0 1 59 45.5V47.5" fill="none" stroke="#ffffff" stroke-width="1.8"/><rect x="45.5" y="46" width="17" height="15" rx="2.5" fill="#4170dc"/><rect x="46.8" y="47.3" width="14.4" height="12.3" rx="1.5" fill="#ffffff"/><circle cx="54" cy="53.3" r="1.3" fill="#4170dc"/></svg>
<div class="lb" style="left:868px;top:848.3px">Persistent ...</div>
<svg class="ic" style="left:1062px;top:756px" width="80" height="80" viewBox="0 0 80 80"><circle cx="40" cy="40" r="40" fill="#4170dc"/><rect x="29.4" y="21.7" width="23.1" height="16.6" fill="#ffffff"/><path d="M34.48 25.02V34.98M38.79 25.02V34.98M43.11 25.02V34.98M47.42 25.02V34.98" stroke="#4170dc" stroke-width="1.44"/><rect x="16.8" y="40.6" width="22.5" height="17.5" fill="#ffffff"/><path d="M21.75 44.1V54.6M25.95 44.1V54.6M30.15 44.1V54.6M34.35 44.1V54.6" stroke="#4170dc" stroke-width="1.41"/><rect x="42.1" y="40.6" width="22.7" height="17.5" fill="#ffffff"/><path d="M47.09 44.1V54.6M51.33 44.1V54.6M55.57 44.1V54.6M59.81 44.1V54.6" stroke="#4170dc" stroke-width="1.42"/></svg>
<div class="lb c" style="left:1012px;top:848.3px">Pod</div>
<svg class="ic" style="left:1228px;top:756px" width="80" height="80" viewBox="0 0 80 80"><path d="M0 2H80L71 40L80 78H0L9 40Z" fill="#4170dc"/><path d="M27 20.1L17.3 25.9V51.2L27 57.6M50.6 20.1L60.4 25.9V51.2L50.6 57.6" fill="none" stroke="#ffffff" stroke-width="3"/><rect x="31.1" y="26.2" width="15.8" height="10.6" fill="#ffffff"/><path d="M34.58 28.32V34.68M37.53 28.32V34.68M40.47 28.32V34.68M43.42 28.32V34.68" stroke="#4170dc" stroke-width="0.99"/><rect x="23" y="38.3" width="15.3" height="11.2" fill="#ffffff"/><path d="M26.37 40.54V47.26M29.22 40.54V47.26M32.08 40.54V47.26M34.93 40.54V47.26" stroke="#4170dc" stroke-width="0.96"/><rect x="39.7" y="38.3" width="15.3" height="11.2" fill="#ffffff"/><path d="M43.07 40.54V47.26M45.92 40.54V47.26M48.78 40.54V47.26M51.63 40.54V47.26" stroke="#4170dc" stroke-width="0.96"/></svg>
<div class="lb" style="left:1200px;top:848.3px">Pod Disru...</div>
<svg class="ic" style="left:1394px;top:756px" width="80" height="80" viewBox="0 0 80 80"><circle cx="40" cy="40" r="40" fill="#4170dc"/><path d="M20 25.8A20.1 10 0 0 1 60.2 25.8V51.9A20.1 10 0 0 1 20 51.9Z" fill="#ffffff"/><path d="M20.5 25.8A20.1 10 0 0 0 59.7 25.8" fill="none" stroke="#4170dc" stroke-width="1.2"/><rect x="31" y="39.8" width="17.7" height="17.7" fill="none" stroke="#4170dc" stroke-width="1.2"/><rect x="33.5" y="43" width="4.8" height="4.8" rx="1" fill="#4170dc"/><rect x="41.3" y="43" width="4.8" height="4.8" rx="1" fill="#4170dc" transform="rotate(45 43.7 45.4)"/><rect x="33.5" y="50" width="4.8" height="4.8" rx="1" fill="#4170dc"/><rect x="41.3" y="50" width="4.8" height="4.8" rx="1" fill="#4170dc"/></svg>
<div class="lb" style="left:1366px;top:848.3px">Pod Secur...</div>
<svg class="ic" style="left:66px;top:906px" width="80" height="80" viewBox="0 0 80 80"><rect width="80" height="80" rx="16" fill="#4170dc"/><rect x="17" y="20.4" width="44.2" height="37.5" rx="0" fill="none" stroke="#ffffff" stroke-width="1.8" stroke-dasharray="4.5 2.5"/><rect x="30.7" y="26" width="16.8" height="11.8" fill="#ffffff"/><path d="M34.4 28.36V35.44M37.53 28.36V35.44M40.67 28.36V35.44M43.8 28.36V35.44" stroke="#4170dc" stroke-width="1.05"/><rect x="22" y="39.5" width="16.5" height="11.8" fill="#ffffff"/><path d="M25.63 41.86V48.94M28.71 41.86V48.94M31.79 41.86V48.94M34.87 41.86V48.94" stroke="#4170dc" stroke-width="1.03"/><rect x="39.5" y="39.5" width="16.8" height="11.8" fill="#ffffff"/><path d="M43.2 41.86V48.94M46.33 41.86V48.94M49.47 41.86V48.94M52.6 41.86V48.94" stroke="#4170dc" stroke-width="1.05"/></svg>
<div class="lb" style="left:38px;top:998.3px">Pod Templ...</div>
<svg class="ic" style="left:232px;top:906px" width="80" height="80" viewBox="0 0 80 80"><path d="M26 0H80L54 80H0Z" fill="#4170dc"/><path d="M21.5 23.2V47" stroke="#ffffff" stroke-width="4.4" stroke-linecap="round"/><path d="M15.41 46.79Q14.8 46 15.8 46L27 46Q28 46 27.39 46.79L22.01 53.71Q21.4 54.5 20.79 53.71Z" fill="#ffffff"/><path d="M31 23.4H58.5L62.2 27.55L58.5 31.7H31ZM31 35.2H51L54.6 39.1L51 43H31ZM31 46.6H43.5L46.8 50.7L43.5 54.8H31Z" fill="#ffffff"/></svg>
<div class="lb" style="left:204px;top:998.3px">Priority Cla...</div>
<svg class="ic" style="left:398px;top:906px" width="80" height="80" viewBox="0 0 80 80"><path d="M26 0H80L54 80H0Z" fill="#4170dc"/><path d="M36.96 17.53Q39.1 16.5 41.24 17.53L55.56 24.42Q57.71 25.46 58.24 27.78L61.77 43.27Q62.3 45.59 60.82 47.45L50.91 59.88Q49.43 61.74 47.05 61.74L31.15 61.74Q28.77 61.74 27.29 59.88L17.38 47.45Q15.9 45.59 16.43 43.27L19.96 27.78Q20.49 25.46 22.64 24.42Z" fill="#ffffff"/><circle cx="39.1" cy="39.8" r="11.4" fill="none" stroke="#4170dc" stroke-width="2.48"/><path d="M39.1 37.82L39.1 22.94M40.65 38.56L52.28 29.29M41.03 40.24L55.54 43.55M39.96 41.59L46.41 54.99M38.24 41.59L31.79 54.99M37.17 40.24L22.66 43.55M37.55 38.56L25.92 29.29" stroke="#4170dc" stroke-width="2.28" stroke-linecap="round"/><circle cx="39.1" cy="39.8" r="3.57" fill="#4170dc"/><circle cx="39.1" cy="39.8" r="1.59" fill="#ffffff"/></svg>
<div class="lb" style="left:370px;top:998.3px">Priority Lev...</div>
<svg class="ic" style="left:564px;top:906px" width="80" height="80" viewBox="0 0 80 80"><path d="M15.94 1.06Q17 0 18.5 0L61.5 0Q63 0 64.06 1.06L78.94 15.94Q80 17 80 18.5L80 61.5Q80 63 78.94 64.06L64.06 78.94Q63 80 61.5 80L18.5 80Q17 80 15.94 78.94L1.06 64.06Q0 63 0 61.5L0 18.5Q0 17 1.06 15.94Z" fill="#4170dc"/><rect x="27.2" y="19" width="33.1" height="26" rx="0" fill="none" stroke="#ffffff" stroke-width="1.6" stroke-dasharray="3.6 2"/><rect x="21" y="25" width="35.8" height="28.5" fill="#4170dc"/><rect x="22.2" y="26.1" width="33.4" height="26.1" rx="0" fill="none" stroke="#ffffff" stroke-width="1.6" stroke-dasharray="3.6 2"/><rect x="15.5" y="30.3" width="38.3" height="31.4" rx="3" fill="#4170dc"/><rect x="16.9" y="31.7" width="35.5" height="28.6" rx="2.5" fill="#ffffff"/></svg>
<div class="lb c" style="left:514px;top:998.3px">Replica Set</div>
<svg class="ic" style="left:730px;top:906px" width="80" height="80" viewBox="0 0 80 80"><path d="M15.94 1.06Q17 0 18.5 0L61.5 0Q63 0 64.06 1.06L78.94 15.94Q80 17 80 18.5L80 61.5Q80 63 78.94 64.06L64.06 78.94Q63 80 61.5 80L18.5 80Q17 80 15.94 78.94L1.06 64.06Q0 63 0 61.5L0 18.5Q0 17 1.06 15.94Z" fill="#4170dc"/><rect x="27.2" y="19" width="33.1" height="26" rx="0" fill="none" stroke="#ffffff" stroke-width="1.6" stroke-dasharray="3.6 2"/><rect x="21" y="25" width="35.8" height="28.5" fill="#4170dc"/><rect x="22.2" y="26.1" width="33.4" height="26.1" rx="0" fill="none" stroke="#ffffff" stroke-width="1.6" stroke-dasharray="3.6 2"/><rect x="15.5" y="30.3" width="38.3" height="31.4" rx="3" fill="#4170dc"/><rect x="16.9" y="31.7" width="35.5" height="28.6" rx="2.5" fill="#ffffff"/><path d="M38.3 45.8L42.6 45.8M37.13 48.63L40.17 51.67M34.3 49.8L34.3 54.1M31.47 48.63L28.43 51.67M30.3 45.8L26 45.8M31.47 42.97L28.43 39.93M34.3 41.8L34.3 37.5M37.13 42.97L40.17 39.93" stroke="#4170dc" stroke-width="3.6"/><circle cx="34.3" cy="45.8" r="6.5" fill="#4170dc"/><circle cx="34.3" cy="45.8" r="2.8" fill="#ffffff"/></svg>
<div class="lb" style="left:702px;top:998.3px">Replicatio...</div>
<svg class="ic" style="left:896px;top:906px" width="80" height="80" viewBox="0 0 80 80"><path d="M15.94 1.06Q17 0 18.5 0L61.5 0Q63 0 64.06 1.06L78.94 15.94Q80 17 80 18.5L80 61.5Q80 63 78.94 64.06L64.06 78.94Q63 80 61.5 80L18.5 80Q17 80 15.94 78.94L1.06 64.06Q0 63 0 61.5L0 18.5Q0 17 1.06 15.94Z" fill="#4170dc"/><rect x="17" y="17" width="44.3" height="44.2" fill="#ffffff"/><rect x="24.2" y="26" width="22.2" height="22.4" rx="1.5" fill="#4170dc"/><circle cx="44" cy="43" r="11.2" fill="#ffffff"/><circle cx="44" cy="43" r="9.4" fill="#4170dc"/></svg>
<div class="lb" style="left:868px;top:998.3px">Resource ...</div>
<svg class="ic" style="left:1062px;top:906px" width="80" height="80" viewBox="0 0 80 80"><path d="M15.94 1.06Q17 0 18.5 0L61.5 0Q63 0 64.06 1.06L78.94 15.94Q80 17 80 18.5L80 61.5Q80 63 78.94 64.06L64.06 78.94Q63 80 61.5 80L18.5 80Q17 80 15.94 78.94L1.06 64.06Q0 63 0 61.5L0 18.5Q0 17 1.06 15.94Z" fill="#4170dc"/><rect x="19" y="18" width="42.2" height="42.2" rx="0" fill="none" stroke="#ffffff" stroke-width="1.8" stroke-dasharray="4.5 2.5"/><path d="M46 32V28.5Q46 26.5 44 26.5H26.5Q24.4 26.5 24.4 28.5V46.9Q24.4 48.9 26.5 48.9H35" fill="none" stroke="#ffffff" stroke-width="1.6" stroke-dasharray="4 2"/><circle cx="45.9" cy="42.5" r="9.6" fill="none" stroke="#ffffff" stroke-width="1.8" stroke-dasharray="4 2.3"/></svg>
<div class="lb" style="left:1034px;top:998.3px">Resource ...</div>
<svg class="ic" style="left:1228px;top:906px" width="80" height="80" viewBox="0 0 80 80"><circle cx="40" cy="40" r="40" fill="#4170dc"/><path d="M25.35 56.55A19.3 19.3 0 1 1 52.65 56.55" fill="none" stroke="#ffffff" stroke-width="8.6"/><path d="M29.81 33.71L20.62 24.52" stroke="#4170dc" stroke-width="1.5"/><path d="M48.19 33.71L57.38 24.52" stroke="#4170dc" stroke-width="1.5"/><circle cx="39" cy="44.9" r="5.9" fill="#ffffff"/><path d="M39.5 41L48.3 32.8L43.5 45Z" fill="#ffffff"/></svg>
<div class="lb" style="left:1200px;top:998.3px">Resource ...</div>
<svg class="ic" style="left:1394px;top:906px" width="80" height="80" viewBox="0 0 80 80"><circle cx="40" cy="40" r="40" fill="#4170dc"/><path d="M36.96 17.53Q39.1 16.5 41.24 17.53L55.56 24.42Q57.71 25.46 58.24 27.78L61.77 43.27Q62.3 45.59 60.82 47.45L50.91 59.88Q49.43 61.74 47.05 61.74L31.15 61.74Q28.77 61.74 27.29 59.88L17.38 47.45Q15.9 45.59 16.43 43.27L19.96 27.78Q20.49 25.46 22.64 24.42Z" fill="#ffffff"/><circle cx="39.1" cy="39.8" r="11.4" fill="none" stroke="#4170dc" stroke-width="2.48"/><path d="M39.1 37.82L39.1 22.94M40.65 38.56L52.28 29.29M41.03 40.24L55.54 43.55M39.96 41.59L46.41 54.99M38.24 41.59L31.79 54.99M37.17 40.24L22.66 43.55M37.55 38.56L25.92 29.29" stroke="#4170dc" stroke-width="2.28" stroke-linecap="round"/><circle cx="39.1" cy="39.8" r="3.57" fill="#4170dc"/><circle cx="39.1" cy="39.8" r="1.59" fill="#ffffff"/></svg>
<div class="lb" style="left:1366px;top:998.3px">Resource ...</div>
<svg class="ic" style="left:66px;top:1056px" width="80" height="80" viewBox="0 0 80 80"><rect width="80" height="80" rx="16" fill="#4170dc"/><circle cx="37.1" cy="26.9" r="10" fill="#ffffff"/><path d="M21.3 53.7Q21.3 38.5 37 38.5H37Q52.7 38.5 52.7 53.7Q52.7 56.7 49.7 56.7H24.3Q21.3 56.7 21.3 53.7Z" fill="#ffffff"/></svg>
<svg class="ic" style="left:232px;top:1056px" width="80" height="80" viewBox="0 0 80 80"><rect width="80" height="80" rx="16" fill="#4170dc"/><circle cx="40.2" cy="29.3" r="14.8" fill="#ffffff"/><circle cx="40" cy="66" r="19.8" fill="#ffffff"/><g transform="rotate(-40 40.5 55)" fill="none" stroke="#4170dc" stroke-width="1.1"><rect x="33" y="52.8" width="9" height="4.4" rx="2.2"/><rect x="39" y="52.8" width="9" height="4.4" rx="2.2"/></g></svg>
<svg class="ic" style="left:398px;top:1056px" width="80" height="80" viewBox="0 0 80 80"><circle cx="40" cy="40" r="40" fill="#4170dc"/><rect x="28.6" y="18.6" width="31.6" height="30.8" rx="1" fill="none" stroke="#ffffff" stroke-width="1.7" stroke-dasharray="4 2"/><rect x="22.3" y="22.8" width="33.6" height="32.8" rx="2" fill="#4170dc"/><rect x="23.3" y="23.8" width="31.6" height="30.8" rx="1.5" fill="none" stroke="#ffffff" stroke-width="1.8"/><rect x="16" y="26.3" width="35.5" height="36" rx="1.5" fill="#4170dc"/><rect x="17.3" y="27.6" width="32.7" height="34" rx="1.2" fill="#ffffff"/><circle cx="33.8" cy="44.1" r="9.2" fill="#4170dc"/><path d="M33.8 38.5V44.1L37.5 47.3" fill="none" stroke="#ffffff" stroke-width="1.6" stroke-linecap="round"/></svg>
<svg class="ic" style="left:564px;top:1056px" width="80" height="80" viewBox="0 0 80 80"><circle cx="40" cy="40" r="40" fill="#4170dc"/><path d="M36.96 17.53Q39.1 16.5 41.24 17.53L55.56 24.42Q57.71 25.46 58.24 27.78L61.77 43.27Q62.3 45.59 60.82 47.45L50.91 59.88Q49.43 61.74 47.05 61.74L31.15 61.74Q28.77 61.74 27.29 59.88L17.38 47.45Q15.9 45.59 16.43 43.27L19.96 27.78Q20.49 25.46 22.64 24.42Z" fill="#ffffff"/><circle cx="39.1" cy="39.8" r="11.4" fill="none" stroke="#4170dc" stroke-width="2.48"/><path d="M39.1 37.82L39.1 22.94M40.65 38.56L52.28 29.29M41.03 40.24L55.54 43.55M39.96 41.59L46.41 54.99M38.24 41.59L31.79 54.99M37.17 40.24L22.66 43.55M37.55 38.56L25.92 29.29" stroke="#4170dc" stroke-width="2.28" stroke-linecap="round"/><circle cx="39.1" cy="39.8" r="3.57" fill="#4170dc"/><circle cx="39.1" cy="39.8" r="1.59" fill="#ffffff"/></svg>
<svg class="ic" style="left:730px;top:1056px" width="80" height="80" viewBox="0 0 80 80"><path d="M40 0L73 14Q74 14.6 74 16.5V35Q74 58 40 90Q6 58 6 35V16.5Q6 14.6 7 14Z" fill="#4170dc"/><path d="M32.1 33V30.9A8 8 0 0 1 48.1 30.9V33" fill="none" stroke="#ffffff" stroke-width="3.2"/><rect x="25" y="32" width="30.1" height="26.4" rx="3" fill="#ffffff"/><circle cx="40.1" cy="45.3" r="3.3" fill="#4170dc"/></svg>
<svg class="ic" style="left:896px;top:1056px" width="80" height="80" viewBox="0 0 80 80"><rect width="80" height="80" fill="#4170dc"/><circle cx="37.1" cy="28.8" r="10.8" fill="#ffffff"/><path d="M20.6 57.7Q20.6 41 36.45 41H36.45Q52.3 41 52.3 57.7Q52.3 60.7 49.3 60.7H23.6Q20.6 60.7 20.6 57.7Z" fill="#ffffff"/><circle cx="37.1" cy="27" r="2.3" fill="#4170dc"/><path d="M36 28H38.2L38.8 33.5H35.4Z" fill="#4170dc"/><circle cx="50.6" cy="52.9" r="8.8" fill="#4170dc"/><circle cx="50.6" cy="52.9" r="7.2" fill="#ffffff"/><path d="M47.36 52.9L49.88 55.42L53.84 50.38" fill="none" stroke="#4170dc" stroke-width="1.6" stroke-linecap="round" stroke-linejoin="round"/></svg>
<svg class="ic" style="left:1062px;top:1056px" width="80" height="80" viewBox="0 0 80 80"><rect width="80" height="80" fill="#4170dc"/><circle cx="38.6" cy="28" r="10.8" fill="#ffffff"/><path d="M21 57.7Q21 40.5 37.25 40.5H37.25Q53.5 40.5 53.5 57.7Q53.5 60.7 50.5 60.7H24Q21 60.7 21 57.7Z" fill="#ffffff"/><circle cx="52.3" cy="52.9" r="8.8" fill="#4170dc"/><circle cx="52.3" cy="52.9" r="7.2" fill="#ffffff"/><path d="M49.06 52.9L51.58 55.42L55.54 50.38" fill="none" stroke="#4170dc" stroke-width="1.6" stroke-linecap="round" stroke-linejoin="round"/></svg>
<svg class="ic" style="left:1228px;top:1056px" width="80" height="80" viewBox="0 0 80 80"><rect width="80" height="80" fill="#4170dc"/><rect x="16" y="21.3" width="47.6" height="35.2" rx="3" fill="none" stroke="#ffffff" stroke-width="1.8" stroke-dasharray="3.5 2.5"/><path d="M25.3 30.7H50.6M25.3 39.5H42.3M25.3 47.7H42.3" stroke="#ffffff" stroke-width="1.8"/><circle cx="49.4" cy="43.5" r="7.8" fill="#d9e2f7"/><path d="M45.8 43.5L48.5 46.2L53 41" fill="none" stroke="#4170dc" stroke-width="1.5" stroke-linecap="round" stroke-linejoin="round"/></svg>
<svg class="ic" style="left:1394px;top:1056px" width="80" height="80" viewBox="0 0 80 80"><path d="M29.24 5.84A12.07 12.07 0 0 1 49.96 5.84L76.84 50.82A14 14 0 0 1 64.82 72L14.38 72A14 14 0 0 1 2.36 50.82Z" fill="#4170dc"/><path d="M33.23 16.56Q35 15.71 36.77 16.56L48.56 22.24Q50.32 23.09 50.76 25L53.67 37.76Q54.11 39.67 52.89 41.2L44.73 51.43Q43.5 52.97 41.54 52.97L28.46 52.97Q26.5 52.97 25.27 51.43L17.11 41.2Q15.89 39.67 16.33 37.76L19.24 25Q19.68 23.09 21.44 22.24Z" fill="#ffffff"/><circle cx="35" cy="34.9" r="9.39" fill="none" stroke="#4170dc" stroke-width="2.04"/><path d="M35 33.27L35 21.02M36.28 33.88L45.85 26.24M36.59 35.26L48.54 37.99M35.71 36.37L41.02 47.41M34.29 36.37L28.98 47.41M33.41 35.26L21.46 37.99M33.72 33.88L24.15 26.24" stroke="#4170dc" stroke-width="1.88" stroke-linecap="round"/><circle cx="35" cy="34.9" r="2.94" fill="#4170dc"/><circle cx="35" cy="34.9" r="1.31" fill="#ffffff"/></svg>
</div>
<svg id="ring" width="1862" height="1390"><ellipse cx="192.3" cy="560" rx="90.2" ry="92.9" fill="none" stroke="#e2412b" stroke-width="5"/></svg>
<div id="tb"></div>
<svg style="position:absolute;left:0;top:0" width="1862" height="1390">
<rect x="0" y="1184" width="67" height="96" fill="#52b09e"/>
<path d="M0.31 1217.27A3 3 0 0 1 4.28 1213.3L33.36 1226.49A3.2 3.2 0 0 1 33.29 1232.35L24.49 1236.08A2.5 2.5 0 0 1 23.12 1237.51L19.7 1246.73A3.2 3.2 0 0 1 13.79 1246.94Z" fill="#fff"/>
<g fill="#fff">
<rect x="6.5" y="1307" width="7.5" height="30" rx="3.7"/>
<rect x="15.5" y="1303" width="7.5" height="32" rx="3.7"/>
<rect x="24.5" y="1307" width="7.5" height="30" rx="3.7"/>
<rect x="32" y="1318" width="7" height="22" rx="3.5"/>
<path d="M0 1318L3 1322V1330H39V1340Q39 1352 30 1352H12Q8 1352 5 1348L-2 1340Z"/>
</g>
<rect x="67" y="1184" width="2" height="192" fill="#303030"/>
<rect x="347" y="1184" width="2" height="192" fill="#303030"/>
<rect x="979" y="1184" width="2" height="192" fill="#303030"/>
<rect x="1253" y="1184" width="2" height="192" fill="#303030"/>
<rect x="1671" y="1184" width="2" height="192" fill="#303030"/>
<g fill="none" stroke="#c4c7ca" stroke-width="4">
<circle cx="122.8" cy="1254" r="4.5" stroke-width="4.2"/>
<circle cx="173" cy="1254" r="4.5" stroke-width="4.2"/>
<circle cx="114.5" cy="1280" r="4.5" stroke-width="4.2"/>
<circle cx="181" cy="1280" r="4.5" stroke-width="4.2"/>
<circle cx="122.8" cy="1305" r="4.5" stroke-width="4.2"/>
<circle cx="173" cy="1305" r="4.5" stroke-width="4.2"/>
<path d="M127.8 1254H142.5V1262.5M168 1254H154V1262.5M119.5 1280H130M176 1280H166M127.8 1305H142.5V1298M168 1305H154V1298"/>
</g>
<rect x="130" y="1262" width="36" height="36" rx="7" fill="#e8ecf0"/>
<rect x="138.5" y="1270.5" width="19.5" height="19.5" rx="2" fill="#212121"/>
<rect x="142.2" y="1274.2" width="12" height="12" rx="0.5" fill="#c4c7ca"/>
<path d="M272.85 1244.12Q276 1242.6 279.15 1244.12L303.81 1255.99Q306.96 1257.51 307.74 1260.92L313.83 1287.6Q314.61 1291.01 312.42 1293.75L295.36 1315.14Q293.18 1317.88 289.68 1317.88L262.32 1317.88Q258.82 1317.88 256.64 1315.14L239.58 1293.75Q237.39 1291.01 238.17 1287.6L244.26 1260.92Q245.04 1257.51 248.19 1255.99Z" fill="#e8ecf0"/>
<circle cx="276" cy="1281.3" r="18.6" fill="none" stroke="#212121" stroke-width="4.6"/>
<path d="M276 1278.3L276 1253.3M278.35 1279.43L297.89 1263.84M278.92 1281.97L303.3 1287.53M277.3 1284L288.15 1306.53M274.7 1284L263.85 1306.53M273.08 1281.97L248.7 1287.53M273.65 1279.43L254.11 1263.84" stroke="#212121" stroke-width="4" stroke-linecap="round"/>
<circle cx="276" cy="1281.3" r="5.6" fill="#212121"/><circle cx="276" cy="1281.3" r="2.6" fill="#e8ecf0"/>
<path d="M406.24 1246.43Q408 1244 409.55 1246.57L426.45 1274.43Q428 1277 425 1277L387 1277Q384 1277 385.76 1274.57Z" fill="#e8ecf0" stroke="#1a1a1a" stroke-width="3"/>
<rect x="396.5" y="1273.8" width="42.8" height="43.4" rx="11" fill="#e8ecf0" stroke="#1a1a1a" stroke-width="3"/>
<circle cx="441.7" cy="1280" r="17.8" fill="#e8ecf0" stroke="#1a1a1a" stroke-width="3"/>
<path d="M518 1246.5H573.5Q579.4 1246.5 579.4 1252.5V1313L565.5 1300H518.5Q512.7 1300 512.7 1294V1252.5Q512.7 1246.5 518 1246.5Z" fill="#e8ecf0"/>
<rect x="526" y="1260" width="40" height="6.5" fill="#212121"/><rect x="526" y="1270" width="40" height="6.7" fill="#212121"/><rect x="526" y="1280" width="40" height="6.5" fill="#212121"/>
<path d="M701 1273 L700.94 1283.64 L700.76 1287.77 L700.45 1290.86 L700.02 1293.4 L699.47 1295.56 L698.78 1297.44 L697.96 1299.09 L697.01 1300.55 L695.9 1301.83 L694.64 1302.95 L693.21 1303.92 L691.58 1304.75 L689.73 1305.44 L687.6 1306.01 L685.1 1306.44 L682.05 1306.75 L677.98 1306.94 L667.5 1307 L657.02 1306.94 L652.95 1306.75 L649.9 1306.44 L647.4 1306.01 L645.27 1305.44 L643.42 1304.75 L641.79 1303.92 L640.36 1302.95 L639.1 1301.83 L637.99 1300.55 L637.04 1299.09 L636.22 1297.44 L635.53 1295.56 L634.98 1293.4 L634.55 1290.86 L634.24 1287.77 L634.06 1283.64 L634 1273 L634.06 1262.36 L634.24 1258.23 L634.55 1255.14 L634.98 1252.6 L635.53 1250.44 L636.22 1248.56 L637.04 1246.91 L637.99 1245.45 L639.1 1244.17 L640.36 1243.05 L641.79 1242.08 L643.42 1241.25 L645.27 1240.56 L647.4 1239.99 L649.9 1239.56 L652.95 1239.25 L657.02 1239.06 L667.5 1239 L677.98 1239.06 L682.05 1239.25 L685.1 1239.56 L687.6 1239.99 L689.73 1240.56 L691.58 1241.25 L693.21 1242.08 L694.64 1243.05 L695.9 1244.17 L697.01 1245.45 L697.96 1246.91 L698.78 1248.56 L699.47 1250.44 L700.02 1252.6 L700.45 1255.14 L700.76 1258.23 L700.94 1262.36Z" fill="#e8ecf0"/>
<path d="M640 1276.5Q646 1273 651 1275Q655 1277 659 1284Q662 1288 666 1285L673 1280Q679 1276 684 1279L692 1285Q695 1288 694 1293Q692 1300 683 1300.5L654 1301Q641 1300 640.5 1290Z" fill="#212121"/>
<circle cx="679" cy="1258" r="7.5" fill="#212121"/>
<path d="M821.2 1280 L821.14 1290.48 L820.96 1294.55 L820.66 1297.6 L820.23 1300.1 L819.68 1302.23 L819 1304.08 L818.19 1305.71 L817.24 1307.14 L816.15 1308.4 L814.9 1309.51 L813.48 1310.46 L811.87 1311.28 L810.03 1311.97 L807.92 1312.52 L805.44 1312.95 L802.42 1313.26 L798.39 1313.44 L788 1313.5 L777.61 1313.44 L773.58 1313.26 L770.56 1312.95 L768.08 1312.52 L765.97 1311.97 L764.13 1311.28 L762.52 1310.46 L761.1 1309.51 L759.85 1308.4 L758.76 1307.14 L757.81 1305.71 L757 1304.08 L756.32 1302.23 L755.77 1300.1 L755.34 1297.6 L755.04 1294.55 L754.86 1290.48 L754.8 1280 L754.86 1269.52 L755.04 1265.45 L755.34 1262.4 L755.77 1259.9 L756.32 1257.77 L757 1255.92 L757.81 1254.29 L758.76 1252.86 L759.85 1251.6 L761.1 1250.49 L762.52 1249.54 L764.13 1248.72 L765.97 1248.03 L768.08 1247.48 L770.56 1247.05 L773.58 1246.74 L777.61 1246.56 L788 1246.5 L798.39 1246.56 L802.42 1246.74 L805.44 1247.05 L807.92 1247.48 L810.03 1248.03 L811.87 1248.72 L813.48 1249.54 L814.9 1250.49 L816.15 1251.6 L817.24 1252.86 L818.19 1254.29 L819 1255.92 L819.68 1257.77 L820.23 1259.9 L820.66 1262.4 L820.96 1265.45 L821.14 1269.52Z" fill="#e8ecf0"/>
<path d="M775 1277V1267Q775 1262 780 1262H797Q802 1262 802 1267V1277" fill="none" stroke="#212121" stroke-width="4.2" stroke-linecap="round"/>
<path d="M788.5 1263V1295M780.5 1297H799" stroke="#212121" stroke-width="4.2" stroke-linecap="round"/>
<path d="M921.5 1249H936Q940 1249 940 1253V1306Q940 1310 936 1310H883.5Q879.5 1310 879.5 1306V1273H914Q921.5 1273 921.5 1265Z" fill="#e8ecf0"/>
<rect x="880.3" y="1250" width="36" height="17.4" rx="4.5" fill="none" stroke="#e8ecf0" stroke-width="1.8"/>
<path d="M1087 1280.25 L1086.94 1290.65 L1086.76 1294.7 L1086.46 1297.72 L1086.04 1300.2 L1085.49 1302.31 L1084.82 1304.15 L1084.01 1305.77 L1083.07 1307.19 L1081.98 1308.44 L1080.74 1309.54 L1079.33 1310.49 L1077.72 1311.3 L1075.9 1311.98 L1073.8 1312.53 L1071.34 1312.96 L1068.34 1313.26 L1064.33 1313.44 L1054 1313.5 L1043.67 1313.44 L1039.66 1313.26 L1036.66 1312.96 L1034.2 1312.53 L1032.1 1311.98 L1030.28 1311.3 L1028.67 1310.49 L1027.26 1309.54 L1026.02 1308.44 L1024.93 1307.19 L1023.99 1305.77 L1023.18 1304.15 L1022.51 1302.31 L1021.96 1300.2 L1021.54 1297.72 L1021.24 1294.7 L1021.06 1290.65 L1021 1280.25 L1021.06 1269.85 L1021.24 1265.8 L1021.54 1262.78 L1021.96 1260.3 L1022.51 1258.19 L1023.18 1256.35 L1023.99 1254.73 L1024.93 1253.31 L1026.02 1252.06 L1027.26 1250.96 L1028.67 1250.01 L1030.28 1249.2 L1032.1 1248.52 L1034.2 1247.97 L1036.66 1247.54 L1039.66 1247.24 L1043.67 1247.06 L1054 1247 L1064.33 1247.06 L1068.34 1247.24 L1071.34 1247.54 L1073.8 1247.97 L1075.9 1248.52 L1077.72 1249.2 L1079.33 1250.01 L1080.74 1250.96 L1081.98 1252.06 L1083.07 1253.31 L1084.01 1254.73 L1084.82 1256.35 L1085.49 1258.19 L1086.04 1260.3 L1086.46 1262.78 L1086.76 1265.8 L1086.94 1269.85Z" fill="#e8ecf0"/>
<g transform="translate(1032.4 1294.7) rotate(-39.5)">
<path d="M0 0L12 -5.2V5.2Z" fill="#0a1014"/>
<rect x="13.5" y="-5.2" width="13.5" height="10.4" fill="#323a3c"/>
<path d="M28.5 -5.5H52Q57 -5.5 57 0Q57 5.5 52 5.5H28.5Z" fill="#0a1014"/>
<path d="M31 -7Q40 -10 47 -7.5" fill="none" stroke="#0a1014" stroke-width="1.2"/>
</g>
<path d="M1074 1277.5V1289" stroke="#0a1014" stroke-width="3"/>
<circle cx="1074.4" cy="1294.7" r="4.6" fill="none" stroke="#0a1014" stroke-width="3.6"/>
<path d="M1069.5 1296L1044 1302" stroke="#0a1014" stroke-width="3"/>
<path d="M1037.8 1304L1049.5 1296.5L1048 1304.5Z" fill="#0a1014"/>
<path d="M1214.6 1279.5 L1214.54 1289.98 L1214.36 1294.05 L1214.05 1297.1 L1213.63 1299.6 L1213.08 1301.73 L1212.4 1303.58 L1211.58 1305.21 L1210.63 1306.64 L1209.53 1307.9 L1208.28 1309.01 L1206.86 1309.96 L1205.24 1310.78 L1203.4 1311.47 L1201.28 1312.02 L1198.8 1312.45 L1195.77 1312.76 L1191.72 1312.94 L1181.3 1313 L1170.88 1312.94 L1166.83 1312.76 L1163.8 1312.45 L1161.32 1312.02 L1159.2 1311.47 L1157.36 1310.78 L1155.74 1309.96 L1154.32 1309.01 L1153.07 1307.9 L1151.97 1306.64 L1151.02 1305.21 L1150.2 1303.58 L1149.52 1301.73 L1148.97 1299.6 L1148.55 1297.1 L1148.24 1294.05 L1148.06 1289.98 L1148 1279.5 L1148.06 1269.02 L1148.24 1264.95 L1148.55 1261.9 L1148.97 1259.4 L1149.52 1257.27 L1150.2 1255.42 L1151.02 1253.79 L1151.97 1252.36 L1153.07 1251.1 L1154.32 1249.99 L1155.74 1249.04 L1157.36 1248.22 L1159.2 1247.53 L1161.32 1246.98 L1163.8 1246.55 L1166.83 1246.24 L1170.88 1246.06 L1181.3 1246 L1191.72 1246.06 L1195.77 1246.24 L1198.8 1246.55 L1201.28 1246.98 L1203.4 1247.53 L1205.24 1248.22 L1206.86 1249.04 L1208.28 1249.99 L1209.53 1251.1 L1210.63 1252.36 L1211.58 1253.79 L1212.4 1255.42 L1213.08 1257.27 L1213.63 1259.4 L1214.05 1261.9 L1214.36 1264.95 L1214.54 1269.02Z" fill="#e8ecf0"/>
<g transform="translate(1163 1294.7) rotate(-42.8)">
<path d="M0 0L10 -5.4V5.4Z" fill="#3f4a4c"/>
<rect x="11.5" y="-5.5" width="32.5" height="11" fill="#0a1014"/>
<rect x="44" y="-5.5" width="4" height="11" fill="#3f4a4c"/>
<path d="M48 -5.5H50Q55.5 -5.5 55.5 0Q55.5 5.5 50 5.5H48Z" fill="#0a1014"/>
</g>
<path d="M1163.6 1297.6Q1166 1306 1182 1306Q1201 1305 1201.5 1294Q1201 1287 1190 1287.5Q1184 1288.5 1184.5 1292Q1186 1294.5 1192 1293.5" fill="none" stroke="#0a1014" stroke-width="3.3" stroke-linecap="round"/>
<path d="M1302 1248.5H1355L1364 1274V1308Q1364 1311.5 1360 1311.5H1296Q1292 1311.5 1292 1308V1274Z" fill="#e8ecf0"/>
<path d="M1297 1270L1303.3 1251.3H1353.7L1359.3 1270Z" fill="#212121"/>
<path d="M1306 1255.2H1351M1304 1260.6H1353M1302.2 1266H1354.8" stroke="#c9ccce" stroke-width="2.7" stroke-linecap="round"/>
<path d="M1318 1269.5H1338V1271.5Q1338 1273.8 1335.5 1273.8H1320.5Q1318 1273.8 1318 1271.5Z" fill="#212121"/>
<path d="M1316.5 1288.5L1314.5 1295.5H1342.5L1340.5 1288.5" fill="none" stroke="#212121" stroke-width="4.2" stroke-linecap="round" stroke-linejoin="round"/>
<path d="M1453.45 1274.11Q1456.5 1272.4 1459.55 1274.11L1484.52 1288.09Q1491.5 1292 1484.52 1295.91L1459.55 1309.89Q1456.5 1311.6 1453.45 1309.89L1428.48 1295.91Q1421.5 1292 1428.48 1288.09Z" fill="#e8ecf0"/>
<path d="M1453.45 1261.61Q1456.5 1259.9 1459.55 1261.61L1484.52 1275.59Q1491.5 1279.5 1484.52 1283.41L1459.55 1297.39Q1456.5 1299.1 1453.45 1297.39L1428.48 1283.41Q1421.5 1279.5 1428.48 1275.59Z" fill="#8a8d90" stroke="#1b1b1b" stroke-width="6" paint-order="stroke"/>
<path d="M1453.45 1249.11Q1456.5 1247.4 1459.55 1249.11L1484.52 1263.09Q1491.5 1267 1484.52 1270.91L1459.55 1284.89Q1456.5 1286.6 1453.45 1284.89L1428.48 1270.91Q1421.5 1267 1428.48 1263.09Z" fill="#e8ecf0" stroke="#1b1b1b" stroke-width="6" paint-order="stroke"/>
<path d="M1617 1279.5 L1616.94 1289.98 L1616.76 1294.05 L1616.45 1297.1 L1616.02 1299.6 L1615.47 1301.73 L1614.78 1303.58 L1613.96 1305.21 L1613.01 1306.64 L1611.9 1307.9 L1610.64 1309.01 L1609.21 1309.96 L1607.58 1310.78 L1605.73 1311.47 L1603.6 1312.02 L1601.1 1312.45 L1598.05 1312.76 L1593.98 1312.94 L1583.5 1313 L1573.02 1312.94 L1568.95 1312.76 L1565.9 1312.45 L1563.4 1312.02 L1561.27 1311.47 L1559.42 1310.78 L1557.79 1309.96 L1556.36 1309.01 L1555.1 1307.9 L1553.99 1306.64 L1553.04 1305.21 L1552.22 1303.58 L1551.53 1301.73 L1550.98 1299.6 L1550.55 1297.1 L1550.24 1294.05 L1550.06 1289.98 L1550 1279.5 L1550.06 1269.02 L1550.24 1264.95 L1550.55 1261.9 L1550.98 1259.4 L1551.53 1257.27 L1552.22 1255.42 L1553.04 1253.79 L1553.99 1252.36 L1555.1 1251.1 L1556.36 1249.99 L1557.79 1249.04 L1559.42 1248.22 L1561.27 1247.53 L1563.4 1246.98 L1565.9 1246.55 L1568.95 1246.24 L1573.02 1246.06 L1583.5 1246 L1593.98 1246.06 L1598.05 1246.24 L1601.1 1246.55 L1603.6 1246.98 L1605.73 1247.53 L1607.58 1248.22 L1609.21 1249.04 L1610.64 1249.99 L1611.9 1251.1 L1613.01 1252.36 L1613.96 1253.79 L1614.78 1255.42 L1615.47 1257.27 L1616.02 1259.4 L1616.45 1261.9 L1616.76 1264.95 L1616.94 1269.02Z" fill="#e8ecf0"/>
<path d="M1572.5 1269.5A10.5 10.5 0 1 1 1590.5 1277L1586 1280.5Q1582.5 1283 1582.5 1286.5" fill="none" stroke="#212121" stroke-width="9"/>
<rect x="1577.8" y="1292.2" width="9.4" height="8.4" rx="1" fill="#212121"/>
<circle cx="1746" cy="1280" r="40" fill="#52b09e"/>
<circle cx="1732.4" cy="1274" r="10.7" fill="#e8ecf0"/>
<rect x="1733.1" y="1274.9" width="20.2" height="20.1" rx="1.8" fill="#e8ecf0" stroke="#52b09e" stroke-width="5" paint-order="stroke"/>
<path d="M1755.32 1267.55Q1756.3 1265.8 1757.28 1267.55L1766.62 1284.25Q1767.6 1286 1765.6 1286L1747 1286Q1745 1286 1745.98 1284.25Z" fill="#e8ecf0" stroke="#52b09e" stroke-width="5" paint-order="stroke"/>
</svg>
</body></html>
